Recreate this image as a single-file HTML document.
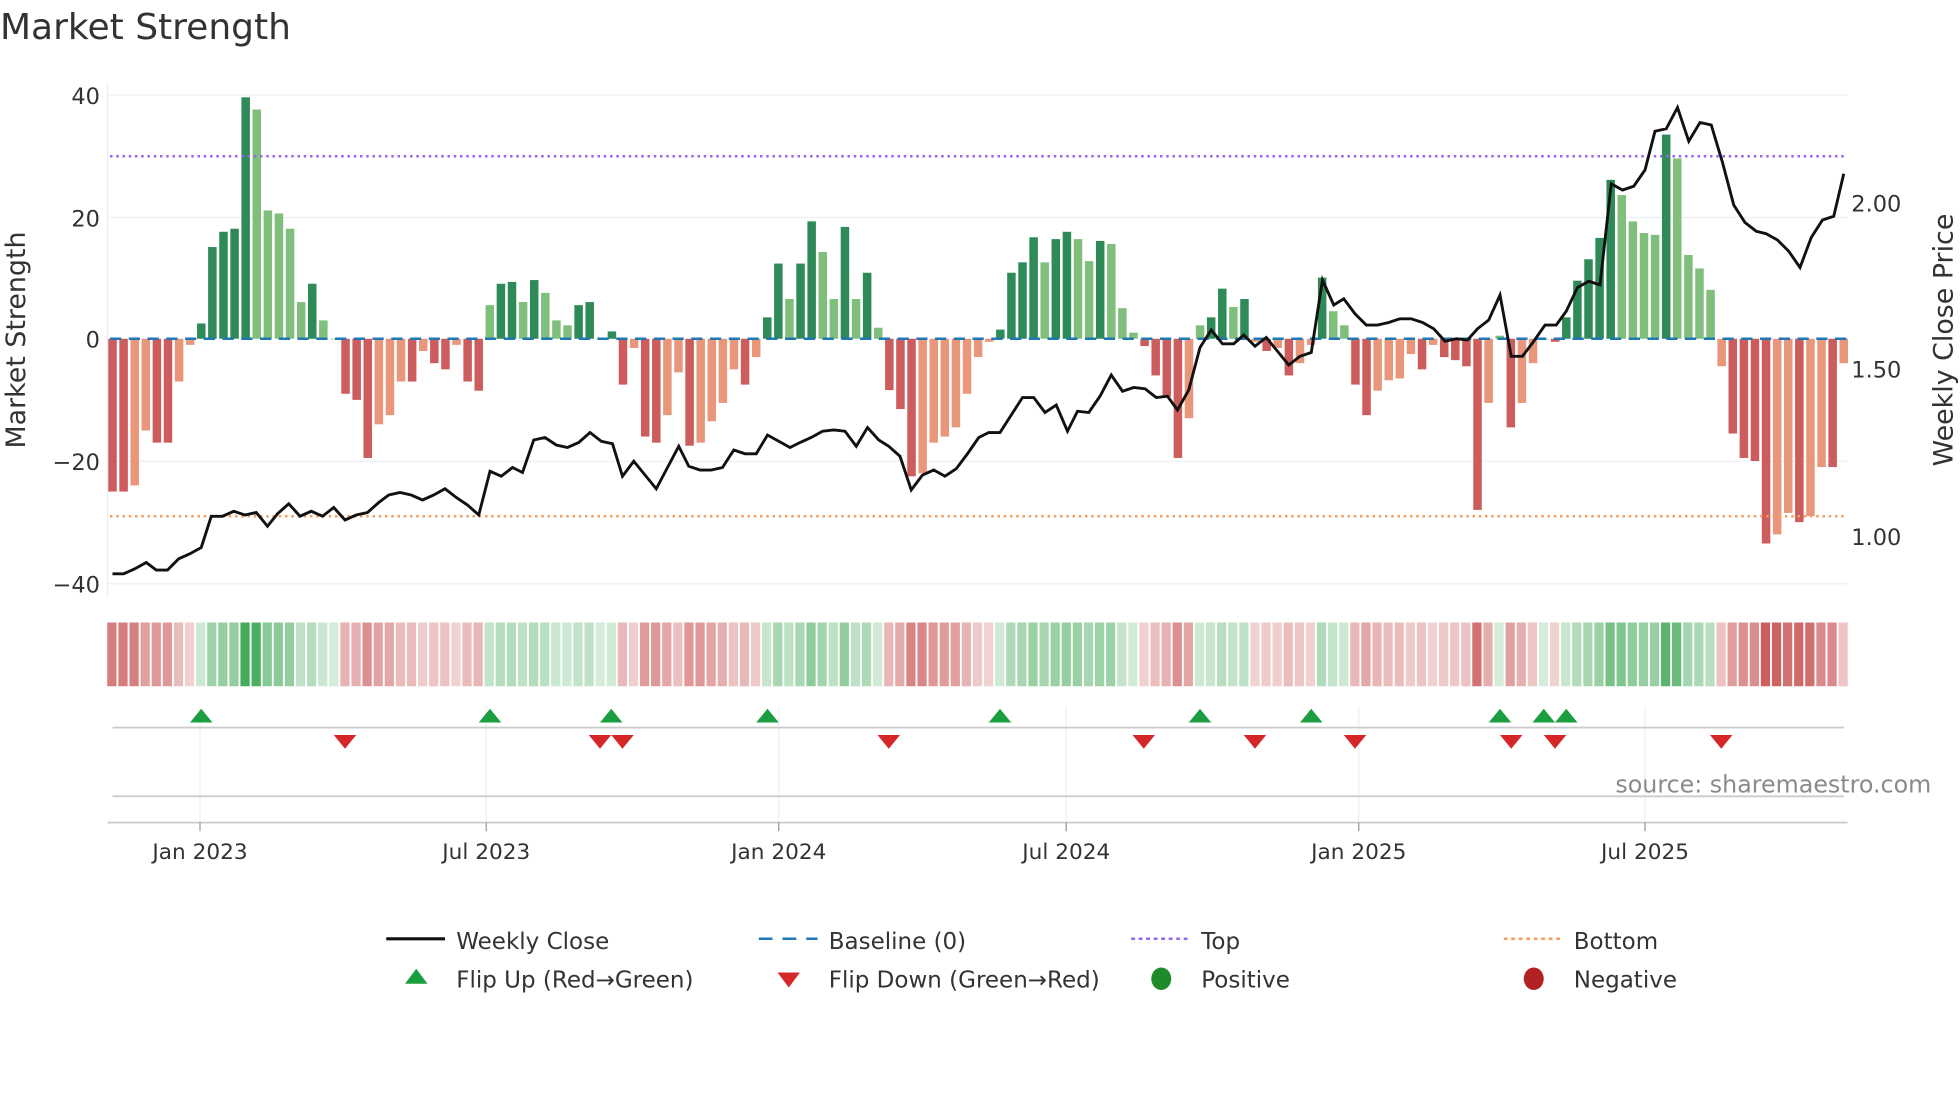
<!DOCTYPE html>
<html><head><meta charset="utf-8"><style>
html,body{margin:0;padding:0;background:#fff;width:1960px;height:1102px;overflow:hidden}
svg{display:block;font-family:"DejaVu Sans","Liberation Sans",sans-serif}
</style></head><body>
<svg id="s" width="1960" height="1102" viewBox="0 0 1568 881.6" xmlns="http://www.w3.org/2000/svg">
<rect width="1568" height="882" fill="#fff"/>
<text x="0" y="31" font-size="28.8" fill="#333">Market Strength</text>
<g id="grid" stroke="#eceff2" stroke-width="1">
<line x1="86" y1="76" x2="1478" y2="76"/><line x1="86" y1="174" x2="1478" y2="174"/><line x1="86" y1="369" x2="1478" y2="369"/><line x1="86" y1="467" x2="1478" y2="467"/>
<line x1="86" y1="66" x2="86" y2="478"/>
</g>
<g font-size="18" fill="#333" text-anchor="end">
<text x="80" y="83">40</text><text x="80" y="181">20</text><text x="80" y="278">0</text><text x="80" y="376">−20</text><text x="80" y="474">−40</text>
</g>
<g font-size="18" fill="#333">
<text x="1481" y="169">2.00</text><text x="1481" y="302">1.50</text><text x="1481" y="436">1.00</text>
</g>
<text transform="translate(20,272) rotate(-90)" font-size="21.5" fill="#333" text-anchor="middle">Market Strength</text>
<text transform="translate(1562,272) rotate(-90)" font-size="21.5" fill="#333" text-anchor="middle">Weekly Close Price</text>
<g id="bars"></g>
<line x1="88" y1="271" x2="1478" y2="271" stroke="#1f77b4" stroke-width="2" stroke-dasharray="9,6"/>
<line x1="88" y1="125" x2="1478" y2="125" stroke="#9467f0" stroke-width="2" stroke-dasharray="2,3"/>
<line x1="88" y1="413" x2="1478" y2="413" stroke="#f0a060" stroke-width="2" stroke-dasharray="2,3"/>
<polyline id="price" fill="none" stroke="#111" stroke-width="2.3"/>
<g id="heat"></g>
<g stroke="#eceff2" stroke-width="1">
<line x1="160" y1="565" x2="160" y2="658"/><line x1="389" y1="565" x2="389" y2="658"/><line x1="623" y1="565" x2="623" y2="658"/><line x1="853" y1="565" x2="853" y2="658"/><line x1="1087" y1="565" x2="1087" y2="658"/><line x1="1316" y1="565" x2="1316" y2="658"/>
</g>
<line x1="90" y1="582" x2="1475" y2="582" stroke="#ccc" stroke-width="1.5"/>
<line x1="90" y1="637" x2="1475" y2="637" stroke="#ccc" stroke-width="1.5"/>
<line x1="86" y1="658" x2="1478" y2="658" stroke="#ccc" stroke-width="1.5"/>
<g stroke="#999" stroke-width="1"><line x1="160" y1="658" x2="160" y2="665"/><line x1="389" y1="658" x2="389" y2="665"/><line x1="623" y1="658" x2="623" y2="665"/><line x1="853" y1="658" x2="853" y2="665"/><line x1="1087" y1="658" x2="1087" y2="665"/><line x1="1316" y1="658" x2="1316" y2="665"/></g>
<g id="marks"></g>
<text x="1545" y="634" font-size="19" fill="#8a8a8a" text-anchor="end">source: sharemaestro.com</text>
<g font-size="17.3" fill="#333" text-anchor="middle">
<text x="160" y="687">Jan 2023</text><text x="389" y="687">Jul 2023</text><text x="623" y="687">Jan 2024</text><text x="853" y="687">Jul 2024</text><text x="1087" y="687">Jan 2025</text><text x="1316" y="687">Jul 2025</text>
</g>
<g font-size="18.4" fill="#333">
<line x1="309" y1="751" x2="356" y2="751" stroke="#111" stroke-width="2.5"/><text x="365" y="759">Weekly Close</text>
<line x1="607" y1="751" x2="654" y2="751" stroke="#1f77b4" stroke-width="2" stroke-dasharray="11,8"/><text x="663" y="759">Baseline (0)</text>
<line x1="905" y1="751" x2="952" y2="751" stroke="#9467f0" stroke-width="2" stroke-dasharray="3,3"/><text x="961" y="759">Top</text>
<line x1="1203" y1="751" x2="1250" y2="751" stroke="#f0a060" stroke-width="2" stroke-dasharray="3,3"/><text x="1259" y="759">Bottom</text>
<polygon points="324,787 333,775 342,787" fill="#1a9e40"/><text x="365" y="790">Flip Up (Red→Green)</text>
<polygon points="622,778 631,790 640,778" fill="#d62728"/><text x="663" y="790">Flip Down (Green→Red)</text>
<ellipse cx="929" cy="783" rx="8" ry="9" fill="#1f8a2a"/><text x="961" y="790">Positive</text>
<ellipse cx="1227" cy="783" rx="8" ry="9" fill="#b22222"/><text x="1259" y="790">Negative</text>
</g>
</svg>
<script>
var V=[-25,-25,-24,-15,-17,-17,-7,-1,2.5,15,17.5,18,39.5,37.5,21,20.5,18,6,9,3,0,-9,-10,-19.5,-14,-12.5,-7,-7,-2,-4,-5,-1,-7,-8.5,5.5,9,9.3,6,9.6,7.5,3,2.2,5.5,6,0,1.2,-7.5,-1.5,-16,-17,-12.5,-5.5,-17.5,-17,-13.5,-10.5,-5,-7.5,-3,3.5,12.3,6.5,12.3,19.2,14.2,6.5,18.3,6.5,10.8,1.8,-8.4,-11.5,-22.5,-22,-17,-16,-14.5,-9,-3,-0.5,1.5,10.8,12.5,16.6,12.5,16.3,17.5,16.3,12.7,16,15.5,5,1,-1.2,-6,-9.5,-19.5,-13,2.2,3.5,8.2,5.2,6.5,-0.5,-2,-1.5,-6,-4,-1,10,4.5,2.2,-7.5,-12.5,-8.5,-6.8,-6.5,-2.5,-5,-1,-3,-3.5,-4.5,-28,-10.5,0.5,-14.5,-10.5,-4,0,-0.5,3.5,9.5,13,16.5,26,23.5,19.2,17.3,17,33.4,29.5,13.7,11.5,8,-4.5,-15.5,-19.5,-20,-33.5,-32,-28.5,-30,-29,-21,-21,-4];
var n=V.length,x0=90,x1=1475,dx=(x1-x0)/(n-1),ns="http://www.w3.org/2000/svg";
function el(t,a,p){var e=document.createElementNS(ns,t);for(var k in a)e.setAttribute(k,a[k]);document.getElementById(p).appendChild(e);}
for(var i=0;i<n;i++){var v=V[i],x=x0+i*dx,pv=i?V[i-1]:0;
 var c=v>=0?(Math.abs(v)>=Math.abs(pv)?"#2e8b57":"#7fbf7b"):(Math.abs(v)>=Math.abs(pv)?"#cd5c5c":"#e9967a");
 var y=271-v*4.89;el("rect",{x:x-3.4,y:Math.min(y,271),width:6.8,height:Math.max(Math.abs(v)*4.89,0.5),fill:c},"bars");
 var hc=v>=0?"rgba(46,160,70,"+(0.2+0.7*Math.min(1,Math.abs(v)/40))+")":"rgba(200,80,80,"+(0.25+0.7*Math.min(1,Math.abs(v)/35))+")";
 el("rect",{x:x-4.2,y:498,width:7.4,height:51,fill:hc},"heat");}
var P=[[90,459],[99,459],[108,455],[117,450],[125,456],[134,456],[143,447],[152,443],[161,438],[169,413],[178,413],[187,409],[196,412],[205,410],[214,421],[222,411],[231,403],[240,413],[249,409],[258,413],[267,406],[276,416],[285,412],[294,410],[303,402],[311,396],[320,394],[329,396],[338,400],[347,396],[356,391],[365,398],[374,404],[383,412],[392,377],[401,381],[410,374],[418,378],[427,352],[436,350],[445,356],[454,358],[463,354],[472,346],[481,353],[490,355],[498,381],[507,369],[516,380],[525,391],[534,374],[543,357],[551,373],[560,376],[569,376],[578,374],[587,360],[596,363],[605,363],[614,348],[623,353],[632,358],[640,354],[649,350],[658,345],[667,344],[676,345],[685,357],[694,342],[703,352],[711,357],[720,365],[729,392],[738,380],[747,376],[756,381],[765,375],[774,363],[783,350],[791,346],[800,346],[809,332],[818,318],[827,318],[836,330],[845,324],[854,345],[862,329],[871,330],[880,317],[889,300],[898,313],[907,310],[916,311],[925,318],[934,317],[942,328],[951,312],[960,278],[969,264],[978,275],[987,275],[995,268],[1004,277],[1013,270],[1022,281],[1031,292],[1040,285],[1049,282],[1058,224],[1067,244],[1075,239],[1084,251],[1093,260],[1102,260],[1111,258],[1120,255],[1129,255],[1138,258],[1147,263],[1156,273],[1165,271],[1174,272],[1182,263],[1191,256],[1200,236],[1209,285],[1218,285],[1227,273],[1236,260],[1245,260],[1253,249],[1262,230],[1271,225],[1280,228],[1289,147],[1298,152],[1307,149],[1316,136],[1324,105],[1333,103],[1342,86],[1351,113],[1360,98],[1369,100],[1378,130],[1387,164],[1396,178],[1405,185],[1413,187],[1422,192],[1431,201],[1440,214],[1449,190],[1458,176],[1467,173],[1475,139]];
document.getElementById("price").setAttribute("points",P.map(function(p){return p.join(",")}).join(" "));
[161,392,489,614,800,960,1049,1200,1235,1253].forEach(function(x){el("polygon",{points:(x-9)+",578 "+x+",567 "+(x+9)+",578",fill:"#1a9e40"},"marks");});
[276,480,498,711,915,1004,1084,1209,1244,1377].forEach(function(x){el("polygon",{points:(x-9)+",588 "+x+",599 "+(x+9)+",588",fill:"#d62728"},"marks");});
</script>
</body></html>
